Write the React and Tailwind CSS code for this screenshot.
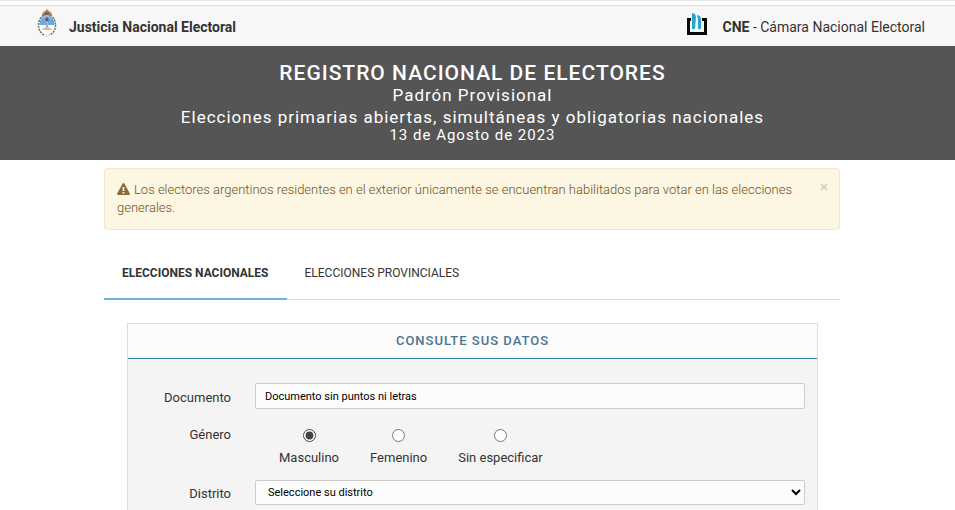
import { useState } from "react";

function CoatOfArms() {
  return (
    <svg viewBox="0 0 20 28" className="h-7 w-5" aria-hidden="true">
      <path d="M5 6c0-2 1.500-3.500 3-4l2-2 2 2c1.500.5 3 2 3 4l-3 2H8z" fill="#bd8a66" />
      <path d="M7 4.500l3-2 3 2v2H7z" fill="#8a6248" />
      <ellipse cx="10" cy="16" rx="8" ry="10" fill="#fff" />
      <path d="M2.500 16C2.500 10 6 6.500 10 6.500s7.500 3.500 7.500 9.500z" fill="#62aee3" />
      <path d="M10 7c2 0 3.500 1 4 2.500H6C6.500 8 8 7 10 7z" fill="#8fc0e6" />
      <path d="M9 11h2v7H9z" fill="#8ab4dc" />
      <path d="M8.500 8.500h3v3.500h-3z" fill="#a83258" />
      <path d="M4 20.500l5-2.500h2l5 2.500-5 .5H9z" fill="#e9b09a" />
      <ellipse cx="10" cy="16" rx="8.500" ry="10.500" fill="none" stroke="#6b6f60" strokeWidth="1.500" strokeDasharray="2 1" />
      <path d="M8 25h4l1 2H7z" fill="#e6edf3" />
    </svg>
  );
}

function CneLogo() {
  return (
    <svg viewBox="0 0 20 23" className="h-[23px] w-5" aria-hidden="true">
      <path d="M0 5h4v3H3v11h14V8h-2V5h5v17H0z" fill="#0a0a0a" />
      <path d="M5 0l3 1 1 3-1 12H5V5z" fill="#2aa5cf" />
      <path d="M10 2l3 1 1 3v10h-3V7z" fill="#2aa5cf" />
    </svg>
  );
}

const genders = ["Masculino", "Femenino", "Sin especificar"];
const tabs = ["Elecciones Nacionales", "Elecciones Provinciales"];

export default function App() {
  const [gender, setGender] = useState("Masculino");
  const [tab, setTab] = useState(tabs[0]);
  const [alertOpen, setAlertOpen] = useState(true);

  return (
    <div className="flex min-h-screen flex-col bg-white font-[Roboto,sans-serif] text-[13px] leading-[18px] text-[#333]">
      <div className="h-[5px] border-t border-[#e8e8e8]" />
      <header className="flex h-[41px] items-start justify-between border-t border-[#ddd] bg-[#f7f7f7] pr-[30px] pl-[37px] text-sm leading-5">
        <div className="flex items-start gap-3 pt-[3px]">
          <CoatOfArms />
          <span className="pt-2 font-bold">Justicia Nacional Electoral</span>
        </div>
        <div className="flex items-start gap-4 pt-[7px]">
          <CneLogo />
          <span className="pt-1"><b>CNE</b> - Cámara Nacional Electoral</span>
        </div>
      </header>

      <div className="flex h-[114px] flex-col items-center bg-[#555] pt-4 pr-[10px] text-center text-white">
        <h1 className="text-[21px] leading-[22px] font-medium tracking-[1px]">REGISTRO NACIONAL DE ELECTORES</h1>
        <p className="text-[17px] leading-[22px] tracking-[1px]">Padrón Provisional</p>
        <p className="text-[17px] leading-[22px] tracking-[1px]">Elecciones primarias abiertas, simultáneas y obligatorias nacionales</p>
        <p className="text-[15px] leading-[14px] tracking-[1px]">13 de Agosto de 2023</p>
      </div>

      <main className="flex flex-1 flex-col pt-2 pr-[115px] pl-[104px]">
        {alertOpen && (
          <div role="alert" className="flex items-start justify-between rounded-[3px] border border-[#f4e8c6] bg-[#fcf6e2] py-3 pr-[11px] pl-3 text-[#6e521f]">
            <p className="max-w-[690px] font-light">
              <svg viewBox="0 0 13 12" className="mr-1 mb-[3px] inline-block h-3 w-[13px]" aria-hidden="true">
                <path fillRule="evenodd" d="M6.500 0c.4 0 .7.200.9.500l5.400 10c.4.700 0 1.500-.9 1.500H1.100c-.9 0-1.300-.8-.9-1.500l5.400-10c.2-.3.500-.5.900-.5zM5.500 4l.2 4h1.600l.2-4zM5.600 9v1.600h1.800V9z" fill="#8a6d3b" />
              </svg>
              Los electores argentinos residentes en el exterior únicamente se encuentran habilitados para votar en las elecciones generales.
            </p>
            <button type="button" aria-label="Cerrar" onClick={() => setAlertOpen(false)} className="flex h-3 w-2 items-center">
              <svg viewBox="0 0 8 8" className="size-2" aria-hidden="true">
                <path d="M1 1l6 6M7 1L1 7" stroke="#d9d2bf" strokeWidth="2" />
              </svg>
            </button>
          </div>
        )}

        <nav role="tablist" className="mt-[15px] flex h-[55px] border-b border-[#ddd] text-xs">
          {tabs.map((t) => (
            <button
              key={t}
              type="button"
              role="tab"
              aria-selected={t === tab}
              onClick={() => setTab(t)}
              className={
                t === tab
                  ? "-mb-px border-b-2 border-[#6fb1d6] px-[18px] pt-[2px] font-bold uppercase"
                  : "-mb-px border-b-2 border-transparent px-[18px] pt-[2px] uppercase"
              }
            >
              {t}
            </button>
          ))}
        </nav>

        <section className="mr-[22px] ml-[23px] mt-[23px] flex-1 border border-b-0 border-[#ddd] bg-[#f4f4f4]">
          <h2 className="h-[35px] border-b border-[#3484ad] bg-[#fcfcfc] text-center font-medium leading-[34px] tracking-[1px] text-[#4c7391]">
            CONSULTE SUS DATOS
          </h2>
          <form className="grid grid-cols-[103px_1fr] gap-x-6 pt-6 pr-3" onSubmit={(e) => e.preventDefault()}>
            <label htmlFor="documento" className="pt-[6px] text-right">Documento</label>
            <input
              id="documento"
              type="text"
              placeholder="Documento sin puntos ni letras"
              className="h-[26px] rounded-xs border border-[#ccc] bg-[#fcfcfc] px-[9px] text-[11px] text-black placeholder:text-black"
            />
            <span id="genero" className="pt-[17px] text-right">Género</span>
            <div role="radiogroup" aria-labelledby="genero" className="flex h-[71px] gap-[31px] pt-5 pl-6">
              {genders.map((g) => (
                <label key={g} className="flex flex-col items-center gap-[7px]">
                  <input
                    type="radio"
                    name="genero"
                    checked={gender === g}
                    onChange={() => setGender(g)}
                    className="size-[13px] accent-[#444]"
                  />
                  {g}
                </label>
              ))}
            </div>
            <label htmlFor="distrito" className="pt-[5px] text-right">Distrito</label>
            <select id="distrito" className="h-[25px] rounded-xs border border-[#ccc] bg-[#fcfcfc] pl-2 text-[11px] text-black">
              <option>Seleccione su distrito</option>
            </select>
          </form>
        </section>
      </main>
    </div>
  );
}
